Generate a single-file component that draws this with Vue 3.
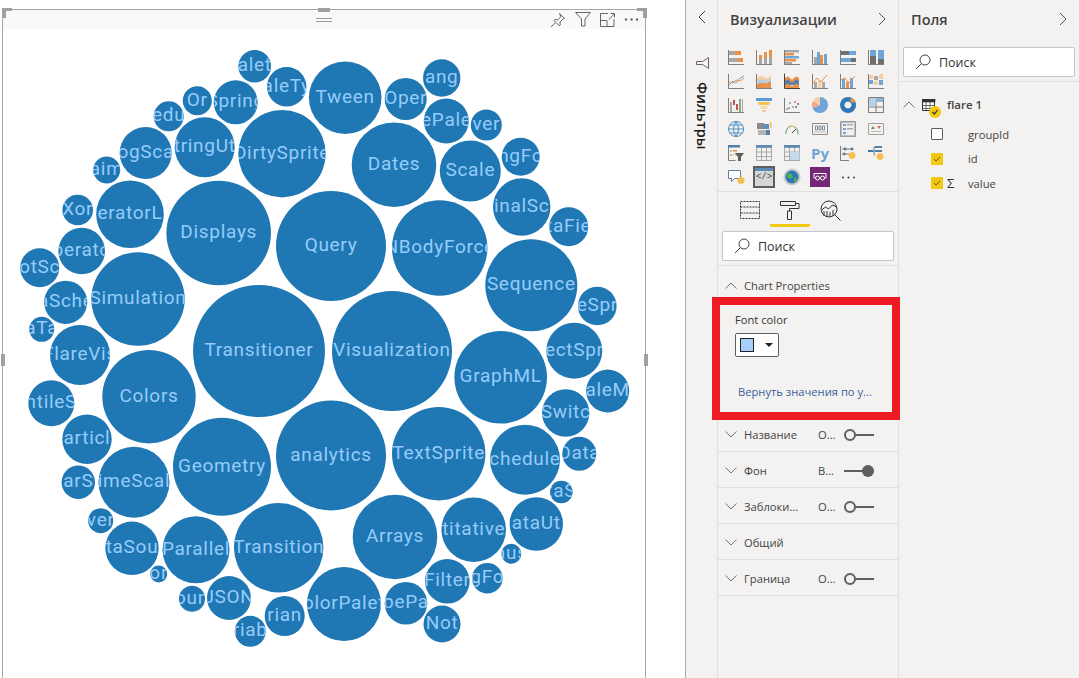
<template>
  <div class="page">
    <div class="report">
      <div class="frame">
        <div class="visual-head">
          <svg class="grip" width="16" height="5" viewBox="0 0 16 5"><path d="M0 .5h16M0 3.500h16" stroke="#9a9a9a" fill="none" /></svg>
          <div class="visual-tools">
            <svg width="16" height="16" viewBox="0 0 16 16" fill="none" stroke="#6b6470">
              <path d="M9.500 1.500l5 5-1.500.5-3 3 .2 3-1 .8-5.200-5.200.8-1 3 .2 3-3zM5.500 10.500l-4.500 4.500" />
            </svg>
            <svg width="16" height="15" viewBox="0 0 16 15" fill="none" stroke="#6b6470">
              <path d="M.5.500h15L10 7v7H6.500V7z" />
            </svg>
            <svg width="15" height="14" viewBox="0 0 15 14" fill="none" stroke="#6b6470">
              <path d="M8 .5H.5v13h13.500V6M.5 7.500h6.500v6M9 6.500l5-5.500M10.500.5h4v4" />
            </svg>
            <svg width="15" height="3" viewBox="0 0 15 3" fill="#6b6470"><circle cx="2" cy="1.500" r="1.200" /><circle cx="7.500" cy="1.500" r="1.200" /><circle cx="13" cy="1.500" r="1.200" /></svg>
          </div>
        </div>
        <svg class="bubbles" width="642" height="649" viewBox="3 29 642 649">
          <defs>
            <clipPath v-for="(b, i) in bubbles" :id="'bubble' + i" :key="i">
              <circle :cx="b[0]" :cy="b[1]" :r="b[2]" />
            </clipPath>
          </defs>
          <g v-for="(b, i) in bubbles" :key="b[3] + i">
            <circle :cx="b[0]" :cy="b[1]" :r="b[2]" fill="#1f77b4" />
            <text
              :x="b[0]"
              :y="b[1] + 5"
              :clip-path="'url(#bubble' + i + ')'"
              text-anchor="middle"
              class="bubble-label"
            >{{ b[3] }}</text>
          </g>
        </svg>
        <i class="handle corner-tl"></i>
        <i class="handle corner-tr"></i>
        <i class="handle top-mid"></i>
        <i class="handle side-l"></i>
        <i class="handle side-r"></i>
      </div>
    </div>

    <aside class="filters">
      <svg width="8" height="14" viewBox="0 0 8 14" fill="none" stroke="#444"><path d="M7 1L1 7l6 6" /></svg>
      <svg class="filters-funnel" width="13" height="12" viewBox="0 0 13 12" fill="none" stroke="#6b6470"><path d="M12.500.5v11L6.500 7.500H.5v-3h6z" /></svg>
      <span class="filters-title">Фильтры</span>
    </aside>

    <section class="viz">
      <header class="pane-head">
        <span>Визуализации</span>
        <svg width="8" height="14" viewBox="0 0 8 14" fill="none" stroke="#555"><path d="M1 1l6 6-6 6" /></svg>
      </header>
      <div class="icon-grid">
        <div v-for="(ic, i) in vizIcons" :key="i" class="icon-cell">
          <span v-if="ic === 'py'" class="py">Py</span>
          <svg v-else width="16" height="16" viewBox="0 0 16 16">
            <path v-for="(p, j) in ic" :key="j" :d="p[0]" :fill="p[2] ? 'none' : p[1]" :stroke="p[2] ? p[1] : 'none'" />
          </svg>
        </div>
        <div class="icon-cell">
          <svg width="18" height="16" viewBox="0 0 18 16">
            <path d="M1.500 1.500h12v8h-6l-3 3v-3h-3z" fill="#fff" stroke="#5f7f9f" />
            <circle cx="14" cy="11.500" r="3.500" fill="#f2c14e" />
          </svg>
        </div>
        <div class="icon-cell">
          <div class="custom-selected">
            <div class="custom-bar"></div>
            <span>&lt;/&gt;</span>
          </div>
        </div>
        <div class="icon-cell">
          <svg width="18" height="18" viewBox="0 0 18 18">
            <circle cx="9" cy="9" r="8.500" fill="#c9c9c9" />
            <circle cx="9" cy="9" r="6.500" fill="#2f78b8" />
            <path d="M5 5l4 1 1 3-3 2-3-2zM11 10l3-1-1 4-2 1z" fill="#4caf50" />
          </svg>
        </div>
        <div class="icon-cell">
          <div class="purple">
            <svg width="14" height="10" viewBox="0 0 14 10" fill="none" stroke="#fff">
              <path d="M1 1.500h12M1 1.500v5M13 1.500v5" />
              <circle cx="4.500" cy="6" r="2" />
              <circle cx="9.500" cy="6" r="2" />
            </svg>
          </div>
        </div>
        <div class="icon-cell more">
          <svg width="15" height="3" viewBox="0 0 15 3" fill="#444"><circle cx="2" cy="1.500" r="1" /><circle cx="7.500" cy="1.500" r="1" /><circle cx="13" cy="1.500" r="1" /></svg>
        </div>
      </div>

      <div class="tabs">
        <div class="tab">
          <svg width="20" height="20" viewBox="0 0 20 20" fill="none" stroke="#333" stroke-dasharray="2 1">
            <path d="M.5 1.500h19v17H.5zM.5 7h19M.5 13h19" />
          </svg>
        </div>
        <div class="tab active">
          <svg width="20" height="20" viewBox="0 0 20 20" fill="none" stroke="#333">
            <path d="M.5 1.500h15v4H.500zM15.500 3.500h3.500v5H9.500v2.500M7.500 11h4v8.500h-4z" />
          </svg>
        </div>
        <div class="tab">
          <svg width="21" height="21" viewBox="0 0 21 21" fill="none" stroke="#333">
            <circle cx="9" cy="9" r="8" />
            <path d="M14.500 14.500l6 6M1.500 10l4-3 3 2 4-4 4 2" />
            <path d="M4 16v-5M7 17v-6M10 17v-5M13 16v-6" />
          </svg>
        </div>
      </div>

      <div class="search-wrap">
        <label class="search">
          <svg width="16" height="16" viewBox="0 0 16 16" fill="none" stroke="#444"><circle cx="10" cy="6" r="5" /><path d="M6.500 9.500L1 15" /></svg>
          <span>Поиск</span>
        </label>
      </div>

      <div class="section-head">
        <svg width="12" height="7" viewBox="0 0 12 7" fill="none" stroke="#777"><path d="M.5 6.500l5.500-5.500 5.500 5.500" /></svg>
        <span>Chart Properties</span>
      </div>
      <div class="section-body">
        <div>Font color</div>
        <div class="picker">
          <i class="swatch"></i>
          <i class="caret"></i>
        </div>
        <div class="reset">Вернуть значения по у...</div>
      </div>

      <div v-for="r in rows" :key="r.name" class="row">
        <svg width="12" height="7" viewBox="0 0 12 7" fill="none" stroke="#777"><path d="M.5.500L6 6l5.500-5.500" /></svg>
        <span class="row-name">{{ r.name }}</span>
        <span class="row-value">{{ r.value }}</span>
        <svg v-if="r.value" width="30" height="14" viewBox="0 0 30 14">
          <template v-if="r.on">
            <path d="M0 7h20" stroke="#605e5c" stroke-width="2" />
            <circle cx="24" cy="7" r="6" fill="#605e5c" />
          </template>
          <template v-else>
            <path d="M10 7h20" stroke="#605e5c" stroke-width="2" />
            <circle cx="6" cy="7" r="5" fill="none" stroke="#605e5c" stroke-width="2" />
          </template>
        </svg>
      </div>

      <div class="red-box"></div>
    </section>

    <section class="fields">
      <header class="pane-head">
        <span>Поля</span>
        <svg width="8" height="14" viewBox="0 0 8 14" fill="none" stroke="#555"><path d="M1 1l6 6-6 6" /></svg>
      </header>
      <div class="search-wrap">
        <label class="search">
          <svg width="16" height="16" viewBox="0 0 16 16" fill="none" stroke="#444"><circle cx="10" cy="6" r="5" /><path d="M6.500 9.500L1 15" /></svg>
          <span>Поиск</span>
        </label>
      </div>
      <div class="tree-head">
        <svg width="12" height="7" viewBox="0 0 12 7" fill="none" stroke="#777"><path d="M.5 6.500l5.500-5.500 5.500 5.500" /></svg>
        <svg class="table-icon" width="20" height="20" viewBox="0 0 20 20">
          <path d="M.5.500h12v11H.5z" fill="#fff" stroke="#333" />
          <path d="M0 0h13v3H0zM4 3v9M8 3v9M0 6.500h13M0 9.500h13" fill="#333" stroke="#333" stroke-width=".7" />
          <circle cx="13" cy="13" r="6" fill="#f2c811" />
          <path d="M10.500 13l2 2 3-4" fill="none" stroke="#333" stroke-width="1.200" />
        </svg>
        <span>flare 1</span>
      </div>
      <div v-for="f in fieldList" :key="f.name" class="field">
        <i class="check" :class="{ on: f.on }">
          <svg v-if="f.on" width="12" height="12" viewBox="0 0 12 12" fill="none" stroke="#6b5a10"><path d="M3 6l2 2 4-4" /></svg>
        </i>
        <span class="sigma">{{ f.sum ? 'Σ' : '' }}</span>
        <span>{{ f.name }}</span>
      </div>
    </section>
  </div>
</template>

<script setup>
// x, y, r, label (only the part of the name that fits in the bubble)
const bubbles = [
  [254.7, 66.3, 16.3, 'alet'], [286.7, 86.7, 19.7, 'aleTy'], [345.2, 97.7, 36.3, 'Tween'],
  [197.3, 100.7, 14.5, 'Or'], [235.7, 102.3, 22, 'Spring'], [168.7, 116.3, 15, 'edu'],
  [204.7, 147.3, 30, 'tringUt'], [282, 153.7, 43.7, 'DirtySprite'], [145.7, 153, 26, 'ogSca'],
  [106.7, 170, 13.5, 'aim'], [130, 214.3, 33.8, 'eratorL'], [77.7, 210, 15.3, 'Xor'],
  [218.7, 233, 52.3, 'Displays'], [331, 246, 55, 'Query'], [81.7, 251, 23.3, 'perato'],
  [39.7, 267.7, 19.5, 'otSc'], [65.7, 302.3, 21.6, 'aSche'], [138, 299, 46.7, 'Simulation'],
  [41.7, 329.3, 12.5, 'aTa'], [80, 355, 30, 'FlareVis'], [259, 351, 66, 'Transitioner'],
  [51.3, 403.3, 23, 'ntileS'], [149, 396.7, 46.7, 'Colors'], [87, 439.3, 24.7, 'articl'],
  [78.3, 482.3, 16.7, 'arS'], [134, 482.3, 35.5, 'imeScal'], [222, 466.7, 49, 'Geometry'],
  [331, 455.5, 55, 'analytics'], [100.7, 520.7, 12.5, 'ver'], [132, 548.3, 26.7, 'taSou'],
  [196, 549.7, 33.5, 'Parallel'], [278.7, 547.7, 44.7, 'Transition'], [158.7, 574, 8.5, 'or'],
  [192, 598.7, 13, 'oun'], [229, 598, 22, 'JSON'], [250.3, 631.3, 15.5, 'riab'],
  [284.7, 616, 20, 'rian'], [344, 604, 37, 'olorPalet'], [441.7, 78, 18.7, 'ang'],
  [405.7, 99, 21, 'Oper'], [446.3, 121, 22.5, 'ePale'], [486.3, 125, 15.5, 'ver'],
  [394, 164.7, 42.3, 'Dates'], [470.3, 171, 30.5, 'Scale'], [520.7, 156.7, 19, 'ngFo'],
  [521.7, 207, 28.7, 'inalSc'], [568.7, 226.7, 19.5, 'taFie'], [439.7, 248, 47.7, 'NBodyForce'],
  [531.3, 285.3, 46, 'Sequence'], [597.3, 306, 19.3, 'eSpr'], [392, 351, 60, 'Visualization'],
  [500.7, 377.3, 46.3, 'GraphML'], [574.3, 350.7, 28, 'ectSpr'], [607.7, 391, 21.5, 'aleM'],
  [565.7, 413, 23.7, 'Switc'], [438.7, 453.7, 46.7, 'TextSprite'], [525, 459.7, 35, 'chedule'],
  [579.3, 453.7, 17, 'Data'], [561.3, 492, 11.3, 'taS'], [395, 537, 42.3, 'Arrays'],
  [473.7, 529.7, 32.3, 'titative'], [536.3, 524, 26.7, 'ataUt'], [511.3, 553.7, 10, 'aus'],
  [447.3, 581.3, 22.3, 'Filter'], [487.3, 578.3, 15.3, 'gFo'], [406, 603.3, 21.3, 'bePa'],
  [442, 624, 18.5, 'Not'],
]

const OR = '#e8914a'
const GR = '#a8a8a8'
const BL = '#6ea5d6'
const TN = '#f3cfa3'
const DK = '#6f6f6f'
const AX = '#7d7d7d'
const axis = ['M.5 1v14.500H16', AX, true]
const R = (x, y, w, h, c) => [`M${x} ${y}h${w}v${h}h${-w}z`, c]

const vizIcons = [
  [axis, R(1, 2, 6, 4, GR), R(7, 2, 6, 4, OR), R(1, 9, 9, 4, GR), R(10, 9, 5, 4, OR)],
  [axis, R(3, 6, 3, 9, OR), R(3, 11, 3, 4, GR), R(8, 3, 3, 12, OR), R(8, 9, 3, 6, GR), R(13, 1, 3, 14, OR), R(13, 8, 3, 7, GR)],
  [axis, R(1, 1, 14, 2.5, GR), R(1, 4, 9, 2.5, OR), R(1, 7, 14, 2.5, BL), R(1, 10, 11, 2.5, OR), R(1, 13, 7, 2, GR)],
  [axis, R(2, 8, 3, 7, GR), R(5, 3, 3, 12, BL), R(8, 6, 3, 9, OR), R(12, 5, 3, 10, BL)],
  [axis, R(1, 2, 8, 4, DK), R(9, 2, 7, 4, BL), R(1, 9, 10, 4, BL), R(11, 9, 5, 4, DK)],
  [axis, R(2, 1, 6, 6, BL), R(2, 7, 6, 8, DK), R(10, 1, 6, 9, BL), R(10, 10, 6, 5, DK)],
  [axis, ['M1 12l4-4 3 2 4-5 4-2', BL, true], ['M1 9l4 1 3-3 4 1 4-3', OR, true]],
  [['M1 5q4-4 7-1t7-2v6H1z', TN], ['M1 8q4-3 7-1t7-2v5H1z', '#b9cfe3'], ['M1 11q4-2 7-1t7-2v7H1z', OR], axis],
  [['M1 5q3-3 5 0t4 0 5 0v5H1z', OR], ['M1 8q3-3 5 0t4 0 5 0v4H1z', '#5b7fa8'], ['M1 12q3-2 5 0t4 0 5 0v3H1z', OR], ['M.5 .5v15H16', '#444', true]],
  [axis, R(2, 9, 3, 6, GR), R(6, 7, 3, 8, TN), R(10, 9, 3, 6, GR), ['M1 10l4-5 4 4 6-7', OR, true]],
  [axis, R(2, 6, 3, 9, BL), R(6, 9, 3, 6, OR), R(10, 5, 3, 10, BL), ['M1 7l4-2 4 5 6-7', OR, true]],
  [R(1, 2, 4, 4, TN), R(6, 3, 4, 4, GR), R(11, 1, 4, 5, TN), R(1, 7, 4, 4, BL), R(6, 8, 4, 4, TN), R(11, 7, 4, 5, BL), axis],
  [axis, R(2, 5, 2, 10, GR), R(5, 3, 2, 5, '#c0504d'), R(8, 7, 2, 6, '#c0504d'), R(11, 2, 2, 13, '#7fae7f'), R(14, 2, 1, 13, GR)],
  [R(0, 1, 16, 3, '#5a9bd5'), ['M2 5h12l-1 3H3z', '#f2c14e'], ['M4 9h8l-1 3H5z', '#f5d9a6'], ['M6 13h4v2H6z', '#f7c7a3']],
  [axis, ['M3 11a1 1 0 1 0 .1 0M6 5a1 1 0 1 0 .1 0M9 9a1 1 0 1 0 .1 0', BL], ['M5 10a1 1 0 1 0 .1 0M11 4a1 1 0 1 0 .1 0', '#e07b6a'], ['M12 9a1 1 0 1 0 .1 0M14 6a1 1 0 1 0 .1 0', DK]],
  [['M8 8V0a8 8 0 0 1 0 16 8 8 0 0 1-7.5-5z', BL], ['M8 8L.5 11A8 8 0 0 1 1 4z', '#f2a58c'], ['M8 8L1 4a8 8 0 0 1 7-4z', TN]],
  [['M8 0a8 8 0 1 0 .1 0zM8 4.5a3.5 3.5 0 1 1-.1 0z', '#2f78b8'], ['M11 .6a8 8 0 0 1 4.5 4.5l-3.5 1a4 4 0 0 0-2-2z', OR]],
  [['M.5 .5h15v15H.5zM.5 10h15M8 10v5.5M8 .5V10', '#7d7d7d', true], R(1, 1, 6.5, 8.5, '#b9cfe3'), R(8.5, 1, 6.5, 4, '#8db5d8')],
  [['M8 .5a7.5 7.5 0 1 0 .1 0zM.5 8h15M8 .5q-5 7.5 0 15q5-7.5 0-15zM2 4h12M2 12h12', '#4a90c2', true]],
  [R(1, 2, 7, 6, '#8a8a8a'), R(8, 3, 5, 5, '#5b8fc0'), R(2, 9, 8, 5, '#b5b5b5'), R(10, 9, 4, 5, '#5b7fa8'), R(14, 1, 1.5, 6, '#f2c14e')],
  [['M2 13a7 7 0 0 1 5-8', '#5b9a68', true], ['M7 5a7 7 0 0 1 4 1', '#f2a13a', true], ['M11 6a7 7 0 0 1 3 7', '#5b9a68', true], ['M8 12l4-4', '#444', true]],
  [['M.5 2.5h15v11H.5z', '#8f8f8f', true], ['M2 11h12', '#bbb', true], ['M3.5 5h2v4h-2zM7 5h2v4H7zM10.5 5h2v4h-2z', '#7f8fa0', true]],
  [['M.5 .5h15v15H.5z', '#9a9a9a', true], ['M1.5 1.5h13v13h-13z', '#bbb', true], R(3, 3, 3, 2, BL), R(7, 3, 6, 1.5, GR), R(3, 7, 3, 2, BL), R(7, 7, 6, 1.5, GR), R(3, 11, 3, 2, BL)],
  [['M.5 2.5h15v11H.5z', '#a0a0a0', true], ['M5 5l2 3H3z', '#5b9a68'], ['M9 5h4l-2 3z', '#d9695f'], R(3, 10, 10, 1, '#bbb')],
  [['M.5 1.5h10M.5 1.5v14h7', '#7d7d7d', true], R(0, 0, 12, 2.5, '#4f7fab'), R(2, 5, 2, 2, '#bbb'), R(5, 5, 4, 1.5, OR), R(2, 9, 2, 2, '#bbb'), R(5, 9, 4, 1.5, TN), ['M7 8h9l-3 4v4h-3v-4z', '#605e5c']],
  [['M.5 2.5h15v13H.5zM5.5 2.5v13M10.5 2.5v13M.5 7h15M.5 11.5h15', '#a8a8a8', true], R(0, 0, 16, 2.5, '#5a8ab5')],
  [['M.5 2.5h15v13H.5zM5.5 2.5v13M10.5 2.5v13M.5 7h15M.5 11.5h15', '#a8a8a8', true], R(0, 0, 16, 2.5, '#5a8ab5'), R(6, 7, 9.5, 8, '#c8d9ea')],
  'py',
  [['M.5 1v14.5H9', AX, true], ['M2 4h11M2 9h7', AX, true], ['M5 2.5a1.5 1.5 0 1 0 .1 0M12 2.5a1.5 1.5 0 1 0 .1 0', '#4f7fab'], ['M4 7.5a1.5 1.5 0 1 0 .1 0', '#777'], ['M12 7a3.5 3.5 0 1 0 .1 0z', '#f2c14e']],
  [R(0, 5, 5, 2, '#2f78b8'), R(7, 1, 7, 2, '#4f7fab'), R(7, 5, 7, 2, '#4f7fab'), ['M5 6h2M6 2h1M6 2v8h1', AX, true], ['M12 8a3.5 3.5 0 1 0 .1 0z', '#f2c14e']],
]

const rows = [
  { name: 'Название', value: 'О...', on: false },
  { name: 'Фон', value: 'В...', on: true },
  { name: 'Заблоки...', value: 'О...', on: false },
  { name: 'Общий', value: '', on: false },
  { name: 'Граница', value: 'О...', on: false },
]

const fieldList = [
  { name: 'groupId', on: false, sum: false },
  { name: 'id', on: true, sum: false },
  { name: 'value', on: true, sum: true },
]
</script>

<style>
html,
body {
  margin: 0;
  background: #fff;
}
</style>

<style scoped>
.page {
  display: flex;
  width: 1079px;
  height: 678px;
  overflow: hidden;
  font-family: "Open Sans", "Noto Sans", sans-serif;
  font-size: 12px;
  color: #333;
}

.report {
  flex: 0 0 686px;
  box-sizing: border-box;
  border-right: 1px solid #a9a9a9;
  padding: 9px 0 0 2px;
}

.frame {
  position: relative;
  box-sizing: border-box;
  width: 644px;
  height: 680px;
  border: 1px solid #a6a6a6;
  border-bottom: 0;
}

.visual-head {
  display: flex;
  justify-content: flex-end;
  height: 19px;
  background: #f9f9f9;
}

.grip {
  position: absolute;
  left: 313px;
  top: 8px;
}

.visual-tools {
  display: flex;
  align-items: center;
  gap: 9px;
  padding-right: 6px;
}

.bubbles {
  display: block;
}

.bubble-label {
  font-family: Roboto, "Noto Sans", sans-serif;
  font-size: 19px;
  letter-spacing: 0.7px;
  fill: #96ccfa;
}

.handle {
  position: absolute;
  background: #a0a0a0;
}

.corner-tl {
  left: -1px;
  top: -2px;
  width: 10px;
  height: 10px;
  background: linear-gradient(#a0a0a0, #a0a0a0) 0 0 / 10px 3px no-repeat,
    linear-gradient(#a0a0a0, #a0a0a0) 0 0 / 4px 10px no-repeat;
}

.corner-tr {
  right: -2px;
  top: -2px;
  width: 10px;
  height: 10px;
  background: linear-gradient(#a0a0a0, #a0a0a0) 0 0 / 10px 3px no-repeat,
    linear-gradient(#a0a0a0, #a0a0a0) 100% 0 / 4px 10px no-repeat;
}

.top-mid {
  left: 315px;
  top: -2px;
  width: 12px;
  height: 4px;
}

.side-l,
.side-r {
  top: 344px;
  width: 4px;
  height: 12px;
}

.side-l {
  left: -2px;
}

.side-r {
  right: -3px;
}

.filters {
  flex: 0 0 32px;
  box-sizing: border-box;
  display: flex;
  flex-direction: column;
  align-items: center;
  padding-top: 10px;
  background: #f3f2f1;
  border-right: 1px solid #e1dfdd;
}

.filters-funnel {
  margin-top: 33px;
  margin-left: 2px;
}

.filters-title {
  margin-top: 13px;
  margin-left: 1px;
  writing-mode: vertical-rl;
  font-size: 14.5px;
  font-weight: 600;
  color: #1b1b1b;
}

.viz,
.fields {
  background: #f3f2f1;
}

.viz {
  position: relative;
  flex: 0 0 181px;
  box-sizing: border-box;
  border-right: 1px solid #e1dfdd;
}

.fields {
  flex: 1;
}

.pane-head {
  display: flex;
  align-items: center;
  justify-content: space-between;
  height: 38px;
  padding: 0 12px;
  font-size: 14.5px;
  font-weight: 600;
  color: #444;
}

.icon-grid {
  display: grid;
  grid-template-columns: repeat(6, 28px);
  grid-auto-rows: 24px;
  padding: 7px 0 2px 4px;
  border-bottom: 1px solid #e1dfdd;
}

.icon-cell {
  display: flex;
  align-items: center;
  justify-content: center;
}

.py {
  font-size: 15px;
  font-weight: 700;
  line-height: 16px;
  color: #6ea5d6;
}

.custom-selected {
  box-sizing: border-box;
  width: 22px;
  height: 22px;
  border: 2px solid #605e5c;
  background: #d6d6d6;
  text-align: center;
  font-family: "Liberation Mono", monospace;
  font-size: 9px;
  line-height: 13px;
  color: #444;
}

.custom-bar {
  height: 3px;
  background: #5a8ab5;
}

.purple {
  display: flex;
  align-items: center;
  justify-content: center;
  width: 20px;
  height: 20px;
  background: #742774;
}

.tabs {
  display: flex;
  padding: 0 0 0 12px;
  height: 36px;
}

.tab {
  display: flex;
  justify-content: center;
  width: 40px;
  height: 35px;
  padding-top: 8px;
  box-sizing: border-box;
}

.tab.active {
  border-bottom: 3px solid #f2c811;
  border-radius: 0 0 2px 2px;
}

.search-wrap {
  padding: 3px 4px 4px;
  border-bottom: 1px solid #e1dfdd;
}

.fields .search-wrap {
  padding-top: 9px;
}

.search {
  display: flex;
  align-items: center;
  gap: 8px;
  box-sizing: border-box;
  width: 172px;
  height: 30px;
  padding-left: 11px;
  background: #fff;
  border: 1px solid #c8c6c4;
  border-radius: 2px;
  font-size: 12.5px;
  color: #333;
}

.section-head {
  display: flex;
  align-items: center;
  gap: 7px;
  height: 38px;
  padding-left: 7px;
  color: #444;
  font-size: 11.2px;
}

.section-body {
  box-sizing: border-box;
  height: 112px;
  padding: 8px 0 0 17px;
  line-height: 16px;
  font-size: 11.2px;
  border-bottom: 1px solid #e1dfdd;
}

.picker {
  display: flex;
  align-items: center;
  justify-content: space-between;
  box-sizing: border-box;
  width: 44px;
  height: 24px;
  margin-top: 5px;
  padding: 0 5px 0 4px;
  background: #fff;
  border: 1px solid #605e5c;
  border-radius: 2px;
}

.swatch {
  box-sizing: border-box;
  width: 14px;
  height: 14px;
  background: #a6d0fa;
  border: 1px solid #222;
}

.caret {
  width: 0;
  height: 0;
  border: 4px solid transparent;
  border-top-color: #222;
  border-bottom: 0;
}

.reset {
  margin: 27px 0 0 3px;
  color: #3a5f9a;
}

.row {
  display: flex;
  align-items: center;
  box-sizing: border-box;
  height: 36px;
  padding: 2px 0 0 7px;
  border-bottom: 1px solid #e1dfdd;
  font-size: 11.2px;
  color: #444;
}

.row-name {
  width: 74px;
  margin-left: 7px;
  white-space: nowrap;
}

.row-value {
  width: 26px;
}

.red-box {
  position: absolute;
  left: -6px;
  top: 297px;
  box-sizing: border-box;
  width: 188px;
  height: 123px;
  border: 8px solid #ed1c24;
}

.tree-head {
  display: flex;
  align-items: center;
  box-sizing: border-box;
  height: 40px;
  padding: 4px 0 0 4px;
  font-weight: 600;
  font-size: 11.5px;
  color: #444;
}

.table-icon {
  margin: 10px 0 0 7px;
}

.tree-head span {
  margin-left: 5px;
}

.field {
  display: flex;
  align-items: center;
  height: 24.5px;
  padding-left: 32px;
  font-size: 11.2px;
  color: #444;
}

.check {
  display: flex;
  box-sizing: border-box;
  width: 12px;
  height: 12px;
  border: 1px solid #605e5c;
  border-radius: 1px;
  background: #fff;
}

.check.on {
  border: 0;
  background: #f2c811;
}

.sigma {
  width: 15px;
  margin-left: 4px;
  margin-right: 6px;
  font-size: 13px;
  color: #333;
}
</style>
